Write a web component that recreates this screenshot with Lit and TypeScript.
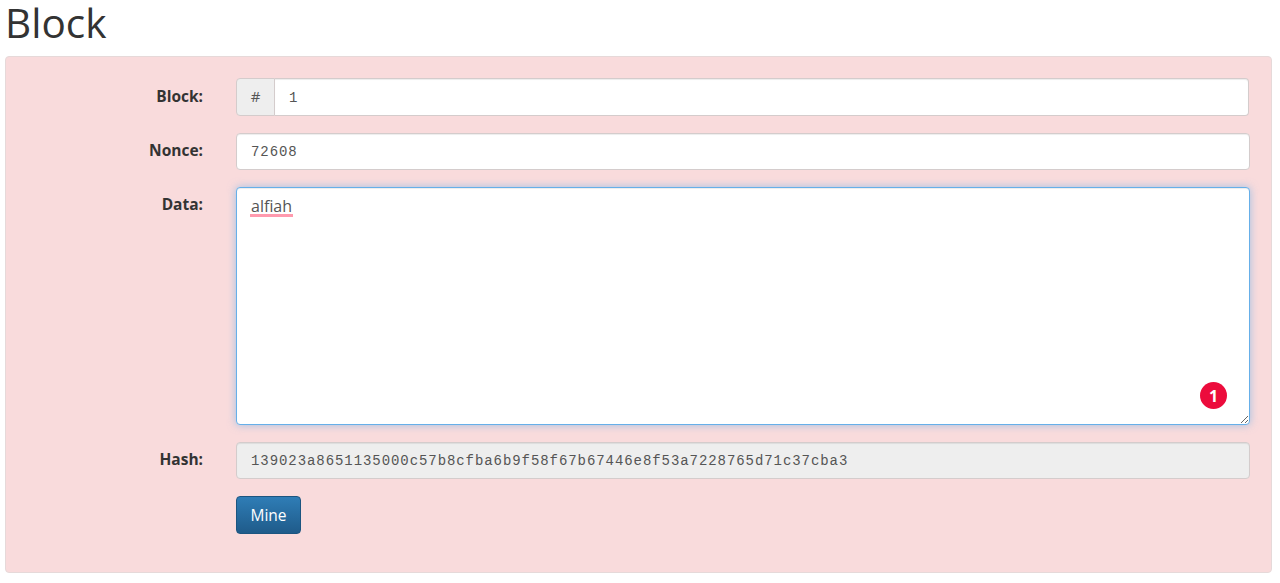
import { LitElement, css, html } from "lit";
import { customElement } from "lit/decorators.js";

@customElement("app-root")
export class AppRoot extends LitElement {
	render() {
		return html`
			<h1>Block</h1>
			<div class="well">
				<div class="row">
					<label>Block:</label>
					<div class="group narrow">
						<span class="addon">#</span>
						<input class="mono" .value=${"1"} />
					</div>
				</div>
				<div class="row">
					<label>Nonce:</label>
					<input class="ctl mono" .value=${"72608"} />
				</div>
				<div class="row">
					<label>Data:</label>
					<div class="area">
						<textarea spellcheck="false" .value=${"alfiah"}></textarea>
						<span class="squiggle"></span>
						<span class="badge">1</span>
					</div>
				</div>
				<div class="row">
					<label>Hash:</label>
					<input
						class="ctl mono off"
						disabled
						.value=${"139023a8651135000c57b8cfba6b9f58f67b67446e8f53a7228765d71c37cba3"}
					/>
				</div>
				<div class="row">
					<span></span>
					<button>Mine</button>
				</div>
			</div>
		`;
	}

	static styles = css`
		:host {
			display: block;
			padding: 0 8px 0 5px;
			font-family: "Open Sans", "Liberation Sans", sans-serif;
			color: #333;
		}
		h1 {
			margin: 0;
			height: 56px;
			font-size: 40.5px;
			font-weight: 500;
			line-height: 46px;
		}
		.well {
			box-sizing: border-box;
			height: 517px;
			padding: 22px 21px 0 0;
			background: #f9dbdc;
			border: 1px solid #e6d9d9;
			border-radius: 4px;
			display: flex;
			flex-direction: column;
			gap: 17px;
		}
		.row {
			display: grid;
			grid-template-columns: 197px 1fr;
			column-gap: 33px;
		}
		label {
			text-align: right;
			font-size: 15.5px;
			font-weight: 700;
			line-height: 20px;
			padding-top: 7px;
		}
		input,
		textarea {
			box-sizing: border-box;
			font-size: 14px;
			color: #555;
			outline: none;
			background: #fff;
		}
		.mono {
			font-family: "Liberation Mono", monospace;
			letter-spacing: 0.93px;
		}
		.ctl {
			width: 100%;
			height: 37px;
			padding: 0 14px;
			border: 1px solid #d4cccc;
			border-radius: 4px;
			box-shadow: inset 0 1px 1px rgba(0, 0, 0, 0.075);
		}
		.off {
			background: #eee;
			opacity: 1;
			-webkit-text-fill-color: #555;
		}
		.group {
			display: flex;
			height: 38px;
			margin-top: -1px;
		}
		.narrow {
			margin-right: 1px;
		}
		.addon {
			box-sizing: border-box;
			width: 39px;
			padding-bottom: 3px;
			display: flex;
			align-items: center;
			justify-content: center;
			font-size: 15px;
			color: #555;
			background: #eee;
			border: 1px solid #d4cccc;
			border-radius: 4px 0 0 4px;
		}
		.group input {
			flex: 1;
			min-width: 0;
			padding: 2px 14px 0;
			border: 1px solid #d4cccc;
			border-left: 0;
			border-radius: 0 4px 4px 0;
			box-shadow: inset 0 1px 1px rgba(0, 0, 0, 0.075);
		}
		.area {
			position: relative;
			height: 238px;
		}
		textarea {
			display: block;
			width: 100%;
			height: 238px;
			padding: 8px 14px;
			font-family: "Open Sans", "Liberation Sans", sans-serif;
			font-size: 16px;
			line-height: 20px;
			border: 1px solid #66afe9;
			border-radius: 4px;
			box-shadow: inset 0 1px 1px rgba(0, 0, 0, 0.075),
				0 0 8px rgba(102, 175, 233, 0.6);
		}
		.squiggle {
			position: absolute;
			left: 14px;
			top: 27px;
			width: 43px;
			height: 3px;
			background: #ff9aae;
		}
		.badge {
			position: absolute;
			left: 964px;
			top: 195px;
			width: 27px;
			height: 27px;
			border-radius: 50%;
			background: #ec0c3c;
			color: #fff;
			font-size: 16px;
			font-weight: 700;
			display: flex;
			align-items: center;
			justify-content: center;
		}
		button {
			box-sizing: border-box;
			width: 65px;
			height: 38px;
			padding: 0;
			font-family: inherit;
			font-size: 15.5px;
			font-weight: 500;
			color: #fff;
			background: linear-gradient(#2f7db6, #1f5b8a);
			border: 1px solid #1c5580;
			border-radius: 4px;
		}
	`;
}
